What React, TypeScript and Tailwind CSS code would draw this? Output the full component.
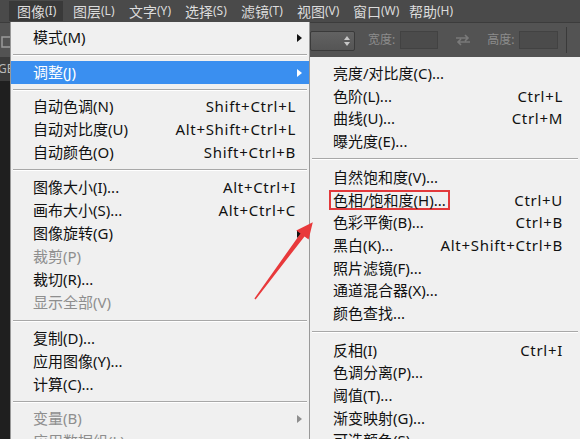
import React from 'react';

type Item = {
	label?: string;
	key?: string;
	arrow?: boolean;
	active?: boolean;
	off?: boolean;
	boxed?: boolean;
	sep?: string;
};

const imageMenu: Item[] = [
	{ label: '模式(M)', arrow: true },
	{ sep: 'h-[12px]' },
	{ label: '调整(J)', arrow: true, active: true },
	{ sep: 'h-[11px]' },
	{ label: '自动色调(N)', key: 'Shift+Ctrl+L' },
	{ label: '自动对比度(U)', key: 'Alt+Shift+Ctrl+L' },
	{ label: '自动颜色(O)', key: 'Shift+Ctrl+B' },
	{ sep: 'h-[12px]' },
	{ label: '图像大小(I)...', key: 'Alt+Ctrl+I' },
	{ label: '画布大小(S)...', key: 'Alt+Ctrl+C' },
	{ label: '图像旋转(G)', arrow: true },
	{ label: '裁剪(P)', off: true },
	{ label: '裁切(R)...' },
	{ label: '显示全部(V)', off: true },
	{ sep: 'h-[13px]' },
	{ label: '复制(D)...' },
	{ label: '应用图像(Y)...' },
	{ label: '计算(C)...' },
	{ sep: 'h-[11px]' },
	{ label: '变量(B)', arrow: true, off: true },
	{ label: '应用数据组(L)...', off: true },
];

const adjustMenu: Item[] = [
	{ label: '亮度/对比度(C)...' },
	{ label: '色阶(L)...', key: 'Ctrl+L' },
	{ label: '曲线(U)...', key: 'Ctrl+M' },
	{ label: '曝光度(E)...' },
	{ sep: 'h-[13px]' },
	{ label: '自然饱和度(V)...' },
	{ label: '色相/饱和度(H)...', key: 'Ctrl+U', boxed: true },
	{ label: '色彩平衡(B)...', key: 'Ctrl+B' },
	{ label: '黑白(K)...', key: 'Alt+Shift+Ctrl+B' },
	{ label: '照片滤镜(F)...' },
	{ label: '通道混合器(X)...' },
	{ label: '颜色查找...' },
	{ sep: 'h-[14px]' },
	{ label: '反相(I)', key: 'Ctrl+I' },
	{ label: '色调分离(P)...' },
	{ label: '阈值(T)...' },
	{ label: '渐变映射(G)...' },
	{ label: '可选颜色(S)...' },
];

const topMenus = [
	['图像', '(I)'],
	['图层', '(L)'],
	['文字', '(Y)'],
	['选择', '(S)'],
	['滤镜', '(T)'],
	['视图', '(V)'],
	['窗口', '(W)'],
	['帮助', '(H)'],
];

function SubArrow({ color }: { color: string }) {
	return (
		<svg width="5" height="8" viewBox="0 0 5 8" className="-mr-[6px] ml-auto">
			<path d="M0 0 L5 4 L0 8 Z" fill={color} />
		</svg>
	);
}

function MenuList({ items, rowH, pl, pr }: { items: Item[]; rowH: string; pl: string; pr: string }) {
	return (
		<>
			{items.map((item, i) => {
				if (item.sep) {
					return (
						<div key={i} className={`${item.sep} flex items-center px-[2px]`}>
							<div className="w-full border-t border-b border-t-[#a8a8a8] border-b-white" />
						</div>
					);
				}
				const color = item.active ? 'text-white' : item.off ? 'text-[#8e8e8e]' : 'text-[#111]';
				return (
					<div
						key={i}
						className={`${rowH} ${pl} ${pr} ${color} flex items-center ${item.active ? 'bg-[#3a8ff0]' : ''}`}
					>
						{item.boxed ? (
							<span className="-ml-[4px] border-2 border-[#e2393b] px-[2px] leading-[16px]">{item.label}</span>
						) : (
							<span>{item.label}</span>
						)}
						{item.key ? <span className="ml-auto tracking-[0.7px]">{item.key}</span> : null}
						{item.arrow ? (
							<SubArrow color={item.active ? '#ffffff' : item.off ? '#8e8e8e' : '#111111'} />
						) : null}
					</div>
				);
			})}
		</>
	);
}

export default function App() {
	return (
		<div className="relative w-[580px] h-[439px] overflow-hidden bg-[#262626] font-['Noto_Sans','Noto_Sans_CJK_SC',sans-serif] flex flex-col">
			{/* menu bar */}
			<div className="h-[22px] bg-[#4a4a4a] flex items-center pl-[9px] text-[#dcdcdc] text-[14px] gap-[2px] shrink-0">
				{topMenus.map(([zh, hot], i) => (
					<div
						key={zh}
						className={`w-[54px] h-[20px] pl-[8px] flex items-center whitespace-nowrap ${i === 0 ? 'bg-[#393939]' : ''}`}
					>
						<span>{zh}</span>
						<span className="text-[12px]">{hot}</span>
					</div>
				))}
			</div>

			<div className="flex flex-1 min-h-0">
				{/* left edge of workspace */}
				<div className="w-[10px] flex flex-col overflow-hidden shrink-0">
					<div className="h-[35px] bg-[#535353] border-t border-[#3c3c3c] flex items-center">
						<svg width="10" height="12" viewBox="0 0 10 12" className="mt-[4px]">
							<path d="M10 1 H2 V11 H10" stroke="#9a9a9a" strokeWidth="1.5" fill="none" />
						</svg>
					</div>
					<div className="h-[24px] bg-[#3b3b3b] flex items-center">
						<span className="-ml-[2px] text-[12px] text-[#b8b8b8]">GB</span>
					</div>
					<div className="flex-1 bg-[#1f1f1f]" />
				</div>

				{/* image menu */}
				<div className="w-[300px] shrink-0 bg-[#f0f0f0] border-r border-l border-[#999] pt-[4px] text-[15px]">
					<MenuList items={imageMenu} rowH="h-[23px]" pl="pl-[22px]" pr="pr-[13px]" />
				</div>

				<div className="flex-1 flex flex-col min-w-0">
					{/* options bar */}
					<div className="h-[35px] bg-[#535353] border-t border-[#3c3c3c] flex items-center text-[12px] text-[#8c8c8c] shrink-0">
						<div className="w-[45px] h-[20px] mt-[1px] rounded-[2px] border border-[#3a3a3a] bg-gradient-to-b from-[#626262] to-[#555] flex items-center justify-end pr-[4px]">
							<svg width="6" height="10" viewBox="0 0 6 10">
								<path d="M0 4 L3 0 L6 4 Z M0 6 L3 10 L6 6 Z" fill="#c8c8c8" />
							</svg>
						</div>
						<span className="ml-[13px]">宽度:</span>
						<div className="ml-[5px] w-[38px] h-[18px] bg-[#4b4b4b] border border-[#424242]" />
						<svg width="16" height="12" viewBox="0 0 16 12" className="ml-[17px]">
							<path d="M1 4 H13 M10 1 L13 4 L10 7 M15 8 H3 M6 5 L3 8 L6 11" stroke="#7a7a7a" strokeWidth="1.6" fill="none" />
						</svg>
						<span className="ml-[16px]">高度:</span>
						<div className="ml-[5px] w-[39px] h-[18px] bg-[#4b4b4b] border border-[#424242]" />
						<div className="ml-[8px] w-px h-[26px] bg-[#3a3a3a]" />
					</div>

					{/* adjust submenu */}
					<div className="flex-1 bg-[#f0f0f0] pt-[5px] text-[15px]">
						<MenuList items={adjustMenu} rowH="h-[22.7px]" pl="pl-[23px]" pr="pr-[17px]" />
					</div>
				</div>
			</div>

			{/* red annotation arrow */}
			<svg className="absolute inset-0 pointer-events-none" width="580" height="439" viewBox="0 0 580 439">
				<polygon
					points="312.8,222.3 308.6,239.6 304.5,236.4 255.6,299.5 254.4,298.6 300.5,233.4 296.3,230.5"
					fill="#e8393b"
				/>
			</svg>
		</div>
	);
}
